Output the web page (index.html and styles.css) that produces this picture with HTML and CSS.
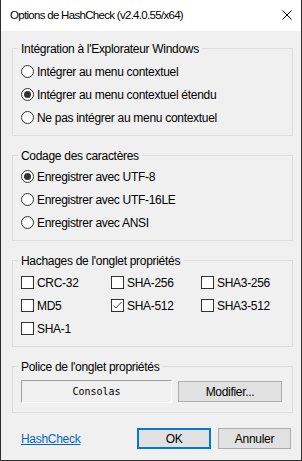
FILE: index.html
```html
<!DOCTYPE html>
<html lang="fr">
<head>
    <meta charset="UTF-8">
    <title>Options de HashCheck</title>
    <link rel="stylesheet" href="styles.css">
</head>
<body>
    <div class="window">
        <div class="titlebar">
            <span class="title">Options de HashCheck (v2.4.0.55/x64)</span>
            <svg class="close" width="10" height="10" viewBox="0 0 10 10">
                <path d="M0.5 0.5 L9.5 9.5 M9.5 0.5 L0.5 9.5" stroke="#000" stroke-width="1" fill="none"/>
            </svg>
        </div>

        <div class="content">
            <!-- Intégration -->
            <div class="group">
                <div class="group-title">Intégration à l'Explorateur Windows</div>
                <div class="options first-a">
                    <label class="option"><span class="radio"></span>Intégrer au menu contextuel</label>
                    <label class="option"><span class="radio checked"></span>Intégrer au menu contextuel étendu</label>
                    <label class="option"><span class="radio"></span>Ne pas intégrer au menu contextuel</label>
                </div>
            </div>

            <!-- Codage -->
            <div class="group">
                <div class="group-title">Codage des caractères</div>
                <div class="options first-b">
                    <label class="option"><span class="radio checked"></span>Enregistrer avec UTF-8</label>
                    <label class="option"><span class="radio"></span>Enregistrer avec UTF-16LE</label>
                    <label class="option"><span class="radio"></span>Enregistrer avec ANSI</label>
                </div>
            </div>

            <!-- Hachages -->
            <div class="group">
                <div class="group-title">Hachages de l'onglet propriétés</div>
                <div class="hash-grid">
                    <label class="option"><span class="check"></span>CRC-32</label>
                    <label class="option"><span class="check"></span>SHA-256</label>
                    <label class="option"><span class="check"></span>SHA3-256</label>
                    <label class="option"><span class="check"></span>MD5</label>
                    <label class="option">
                        <span class="check">
                            <svg width="11" height="11" viewBox="0 0 11 11">
                                <path d="M1.5 5.5 L4 8 L9.5 2" stroke="#444" stroke-width="1" fill="none"/>
                            </svg>
                        </span>SHA-512</label>
                    <label class="option"><span class="check"></span>SHA3-512</label>
                    <label class="option"><span class="check"></span>SHA-1</label>
                </div>
            </div>

            <!-- Police -->
            <div class="group">
                <div class="group-title">Police de l'onglet propriétés</div>
                <div class="font-row">
                    <div class="font-box">Consolas</div>
                    <button class="btn font-btn">Modifier...</button>
                </div>
            </div>

            <div class="footer">
                <a class="link" href="#">HashCheck</a>
                <div class="buttons">
                    <button class="btn default">OK</button>
                    <button class="btn">Annuler</button>
                </div>
            </div>
        </div>
    </div>
</body>
</html>
```

FILE: styles.css
```css
body {
    margin: 0;
    font-family: "Segoe UI", "Liberation Sans", Arial, sans-serif;
    font-size: 12px;
    letter-spacing: -0.3px;
    color: #000;
}

.window {
    width: 302px;
    height: 461px;
    box-sizing: border-box;
    background: #f0f0f0;
    border: 1px solid #2e2e2e;
    border-top: none;
}

.titlebar {
    height: 31px;
    background: #fff;
    display: flex;
    align-items: center;
    justify-content: space-between;
    padding: 0 9px 0 9px;
}

.title {
    line-height: 31px;
    font-size: 11.5px;
    letter-spacing: -0.7px;
}

.close {
    display: block;
    margin-top: -1px;
}

.content {
    padding: 17px 8px 0 11px;
}

.group {
    border: 1px solid #dcdcdc;
    margin-bottom: 19px;
}

.group-title {
    width: fit-content;
    margin: -8px 0 0 5px;
    padding: 0 3px;
    line-height: 16px;
    background: #f0f0f0;
}

.options {
    padding: 0 0 6px 8px;
}

.first-a {
    padding-top: 3px;
}

.first-b {
    padding-top: 1px;
}

.option {
    display: flex;
    align-items: center;
    gap: 3px;
    height: 23px;
    white-space: nowrap;
}

.radio {
    width: 11px;
    height: 11px;
    border: 1px solid #333;
    border-radius: 50%;
    background: #fff;
    display: flex;
    align-items: center;
    justify-content: center;
}

.radio.checked::after {
    content: "";
    width: 7px;
    height: 7px;
    border-radius: 50%;
    background: #333;
}

.hash-grid {
    display: grid;
    grid-template-columns: 90px 90px 90px;
    padding: 2px 0 6px 8px;
}

.check {
    width: 11px;
    height: 11px;
    border: 1px solid #333;
    background: #fff;
    display: flex;
    align-items: center;
    justify-content: center;
}

.check svg {
    display: block;
}

.font-row {
    display: flex;
    align-items: flex-start;
    gap: 6px;
    padding: 5px 0 9px 8px;
}

.font-box {
    width: 149px;
    height: 21px;
    border: 1px solid #a0a0a0;
    border-right-color: #fff;
    border-bottom-color: #fff;
    font-family: "DejaVu Sans Mono", "Liberation Mono", monospace;
    font-size: 10px;
    letter-spacing: 0;
    line-height: 21px;
    text-align: center;
}

.btn {
    height: 21px;
    box-sizing: border-box;
    background: #e1e1e1;
    border: 1px solid #adadad;
    font-family: inherit;
    font-size: 12px;
    letter-spacing: inherit;
    color: #000;
    padding: 0;
}

.font-btn {
    width: 104px;
    margin-top: 1px;
}

.footer {
    display: flex;
    align-items: center;
    justify-content: space-between;
    margin-top: -4px;
    padding: 0 2px 0 9px;
}

.link {
    color: #0066cc;
    text-decoration: underline;
}

.buttons {
    display: flex;
    gap: 7px;
}

.buttons .btn {
    width: 73px;
}

.btn.default {
    width: 74px;
    border: 2px solid #0078d7;
}
```
